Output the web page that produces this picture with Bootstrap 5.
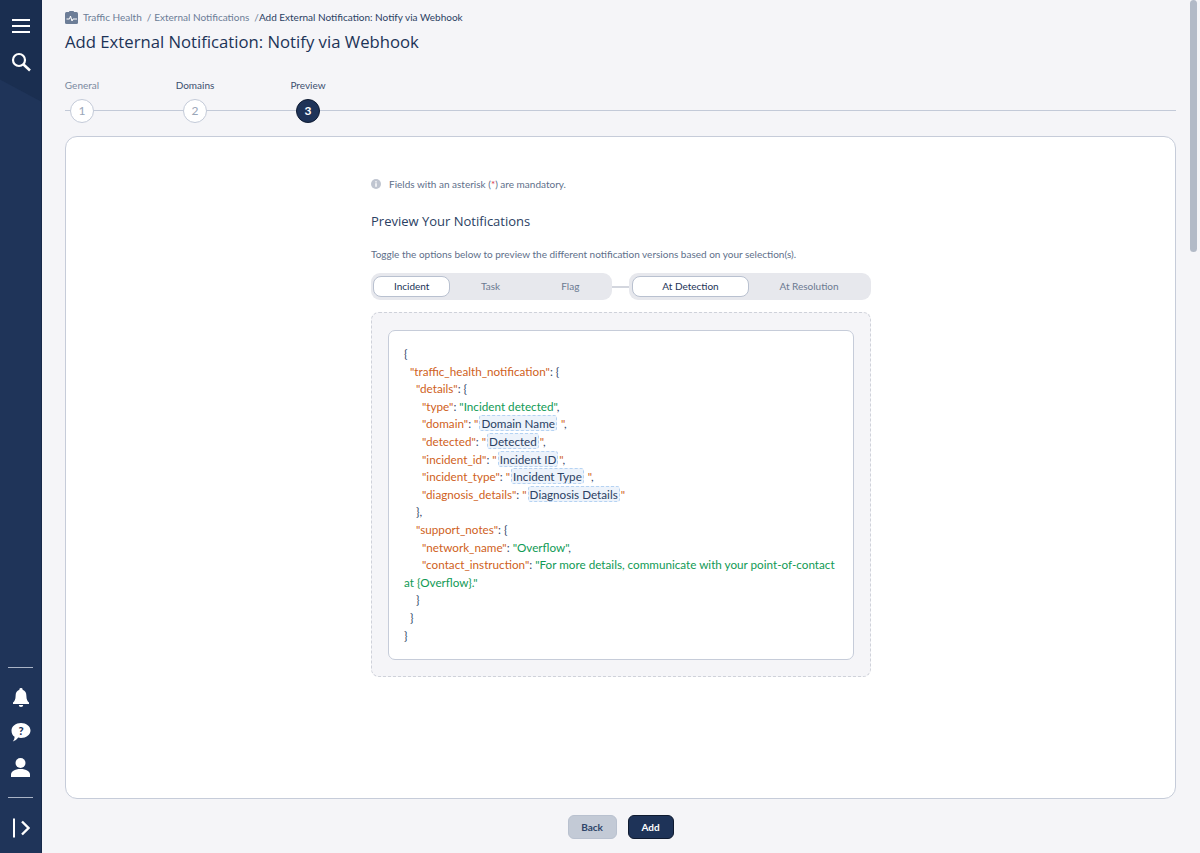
<!DOCTYPE html>
<html lang="en">
<head>
<meta charset="utf-8">
<title>Add External Notification</title>
<link href="https://cdn.jsdelivr.net/npm/bootstrap@5.3.0/dist/css/bootstrap.min.css" rel="stylesheet">
<style>
html,body{height:853px;overflow:hidden}
body{font-family:"Lato","Liberation Sans",sans-serif;background:#f5f5f8;color:#1c3357;font-size:10px}
.shell{height:853px;position:relative}
.rail{width:42px;background:#1f3459;position:relative;overflow:hidden;border-right:1px solid #17294a}
.rail-shade{position:absolute;top:0;left:0;width:42px;height:102px;background:#1a2e50;clip-path:polygon(0 0,100% 0,100% 100%,0 78%)}
.rail-top,.rail-bottom{position:relative;z-index:1}
.rail-top{padding-top:18px;gap:18px}
.rail-bottom{padding-bottom:15px}
.rail-rule{width:25px;height:1px;background:#aab4c6;margin:0 auto}
.rail svg{display:block;margin:0 auto}
.gap-bell{margin-top:20px!important}
.gap-help{margin-top:16px!important}
.gap-user{margin-top:16px!important}
.gap-rule{margin-top:20px!important}
.gap-arrow{margin-top:20px!important}
.maincol{padding:0 24px 0 23px;min-width:0}
.crumbs{height:34px;color:#6c7d97;font-size:10px;line-height:14px}
.crumb-sep{margin:0 3px 0 5px}
.crumb-now{color:#2b4163;margin-left:-3px}
.crumb-icon{margin-right:5px}
.pagehead{font-family:"Open Sans","Lato",sans-serif;font-size:16.7px;line-height:15px;font-weight:500;color:#1c3357;margin:0}
.stepper{margin-top:30px;position:relative;gap:79px;height:50px}
.stepper::before{content:"";position:absolute;left:0;right:0;top:31px;height:1px;background:#c3cad8}
.stepitem{width:34px;position:relative;z-index:1}
.steplabel{white-space:nowrap;font-size:10px;line-height:12px;height:20px;color:#3b4e6e}
.steplabel-muted{color:#7a899f}
.stepdot{width:24px;height:24px;border-radius:50%;background:#fff;border:1px solid #c3cad8;font-size:12px;color:#9aa6b8;line-height:22px;text-align:center}
.stepdot-on{background:#1e3358;border-color:#101c33;color:#fff;font-weight:700}
.panelbox{height:663px;margin-top:7px;background:#fff;border:1px solid #c6ccd9;border-radius:12px;padding-top:40px}
.panelinner{width:500px;margin-left:305px}
.reqnote{color:#5e6f8a;font-size:10px;line-height:14px;gap:8px}
.reqstar{color:#d8344a}
.subhead{font-family:"Open Sans","Lato",sans-serif;font-size:13px;font-weight:400;color:#2b4163;line-height:18px;margin:21px 0 0}
.hint{color:#5e6f8a;font-size:10px;line-height:14px;margin:17px 0 0}
.togglebar{margin-top:12px;height:27px}
.toggroup{background:#e7e8ed;border-radius:9px;height:27px;padding:3px 2px;font-size:10px;color:#6c7a91}
.togglink{flex:0 0 auto;width:17px;height:2px;background:#d3d6de}
.togopt{height:21px;line-height:21px;text-align:center;border-radius:8px}
.togopt-on{background:#fff;border:1px solid #b9c1d0;line-height:19px;color:#1c3357}
.g1{width:241px}.g2{width:242px;padding-left:3px}
.w-a{width:78px}.w-b{width:81px}.w-c{width:80px}.w-d{width:117px}.w-e{flex:1}
.dashbox{margin-top:12px;height:365px;border:1px dashed #cfd2da;border-radius:8px;background:#f5f5f8;padding:17px 16px}
.jsonbox{height:330px;background:#fff;border:1px solid #c6ccd9;border-radius:7px;padding:14px 15px;font-size:11.7px;line-height:17.6px;color:#34496b}
.jl{display:block}
.i1{padding-left:6px}.i2{padding-left:12px}.i3{padding-left:18px}
.i3w{text-indent:18px}
.jk{color:#cf5f22}
.jv{color:#0f9a55}
.tok{background:#edf3fb;border:1px dashed #b5d3f3;border-radius:3px;padding:0 1px;margin:0 1px;color:#2b4163}
.footbar{margin-top:16px;gap:11px}
.btn-back,.btn-add{font-size:10px;font-weight:700;height:24px;padding:0;line-height:22px;border-radius:6px}
.btn-back{width:49px;background:#c3cad6;border:1px solid #b9c1cf;color:#2f4569}
.btn-add{width:46px;background:#1e3358;border:1px solid #0e1a30;color:#fff}
.scrollthumb{position:absolute;top:0;right:3px;width:7px;height:252px;background:#b2bac7;border-radius:4px}
</style>
</head>
<body>
<div class="shell d-flex">
  <nav class="rail d-flex flex-column justify-content-between flex-shrink-0">
    <div class="rail-shade"></div>
    <div class="rail-top d-flex flex-column">
      <svg width="20" height="16" viewBox="0 0 20 16" aria-label="Menu"><path d="M1 2h18M1 8h18M1 14h18" stroke="#fff" stroke-width="2" fill="none"/></svg>
      <svg width="20" height="20" viewBox="0 0 20 20" aria-label="Search"><circle cx="8" cy="8" r="6" stroke="#fff" stroke-width="2.2" fill="none"/><path d="M12.5 12.5 19 18.5" stroke="#fff" stroke-width="2.6" fill="none"/></svg>
    </div>
    <div class="rail-bottom d-flex flex-column">
      <div class="rail-rule"></div>
      <svg class="gap-bell" width="16" height="19" viewBox="0 0 16 19" aria-label="Notifications"><path d="M8 0a1.6 1.6 0 0 1 1.6 1.8C12.3 2.6 13.4 5 13.4 8c0 3.500 1 5 2.600 6.600V16H0v-1.400C1.600 13 2.600 11.500 2.600 8c0-3 1.100-5.400 3.800-6.200A1.600 1.600 0 0 1 8 0zM5.800 17h4.400a2.200 2 0 0 1-4.400 0z" fill="#fff"/></svg>
      <svg class="gap-help" width="20" height="19" viewBox="0 0 20 19" aria-label="Help"><path d="M10 0c5.200 0 9.500 3.300 9.500 7.500S15.200 15 10 15c-1 0-1.900-.1-2.800-.4C6 16.500 4 18 1.800 18.500c1-1.200 1.700-2.600 1.800-4.700C1.600 12.500.5 10.100.5 7.500.500 3.300 4.800 0 10 0z" fill="#fff"/><text x="10" y="12" text-anchor="middle" font-family="Lato" font-size="11" font-weight="900" fill="#1e3358">?</text></svg>
      <svg class="gap-user" width="19" height="19" viewBox="0 0 19 19" aria-label="Profile"><circle cx="9.500" cy="5" r="5" fill="#fff"/><path d="M0 19v-2.500C0 13.500 3.500 11 9.500 11s9.500 2.500 9.500 5.500V19z" fill="#fff"/></svg>
      <div class="rail-rule gap-rule"></div>
      <svg class="gap-arrow" width="18" height="20" viewBox="0 0 18 20" aria-label="Expand"><path d="M2 .5v19" stroke="#fff" stroke-width="2" fill="none"/><path d="M10 3.500l6.500 6.500-6.500 6.500" stroke="#fff" stroke-width="2.400" fill="none"/></svg>
    </div>
  </nav>
  <main class="maincol flex-grow-1 d-flex flex-column">
    <div class="crumbs d-flex align-items-center">
      <svg class="crumb-icon" width="13" height="13" viewBox="0 0 13 13"><rect x="0" y="1" width="13" height="12" rx="1.500" fill="#6c7d97"/><rect x="4" y="0" width="5" height="2.500" rx=".8" fill="#6c7d97"/><path d="M1.500 8h3l1-3 1.500 5 1-2h4" stroke="#fff" stroke-width="1" fill="none"/></svg>
      <span>Traffic Health</span><span class="crumb-sep">/</span><span>External Notifications</span><span class="crumb-sep">/</span><span class="crumb-now">Add External Notification: Notify via Webhook</span>
    </div>
    <h1 class="pagehead">Add External Notification: Notify via Webhook</h1>
    <div class="stepper d-flex">
      <div class="stepitem d-flex flex-column align-items-center"><div class="steplabel steplabel-muted">General</div><div class="stepdot flex-shrink-0">1</div></div>
      <div class="stepitem d-flex flex-column align-items-center"><div class="steplabel">Domains</div><div class="stepdot flex-shrink-0">2</div></div>
      <div class="stepitem d-flex flex-column align-items-center"><div class="steplabel">Preview</div><div class="stepdot stepdot-on flex-shrink-0">3</div></div>
    </div>
    <section class="panelbox">
      <div class="panelinner">
        <div class="reqnote d-flex align-items-center">
          <svg width="10" height="10" viewBox="0 0 10 10"><circle cx="5" cy="5" r="5" fill="#bfc5d0"/><rect x="4.300" y="4.200" width="1.400" height="3.600" fill="#fff"/><rect x="4.300" y="2.200" width="1.400" height="1.300" fill="#fff"/></svg>
          <span>Fields with an asterisk (<span class="reqstar">*</span>) are mandatory.</span>
        </div>
        <h2 class="subhead">Preview Your Notifications</h2>
        <p class="hint">Toggle the options below to preview the different notification versions based on your selection(s).</p>
        <div class="togglebar d-flex align-items-center">
          <div class="toggroup g1 d-flex">
            <div class="togopt togopt-on w-a">Incident</div><div class="togopt w-b">Task</div><div class="togopt w-c">Flag</div>
          </div>
          <div class="togglink"></div>
          <div class="toggroup g2 d-flex">
            <div class="togopt togopt-on w-d">At Detection</div><div class="togopt w-e">At Resolution</div>
          </div>
        </div>
        <div class="dashbox">
          <div class="jsonbox">
            <span class="jl">{</span>
            <span class="jl i1"><span class="jk">"traffic_health_notification"</span>: {</span>
            <span class="jl i2"><span class="jk">"details"</span>: {</span>
            <span class="jl i3"><span class="jk">"type"</span>: <span class="jv">"Incident detected"</span>,</span>
            <span class="jl i3"><span class="jk">"domain"</span>: <span class="jk">"</span><span class="tok">Domain Name</span> <span class="jk">"</span>,</span>
            <span class="jl i3"><span class="jk">"detected"</span>: <span class="jk">"</span><span class="tok">Detected</span><span class="jk">"</span>,</span>
            <span class="jl i3"><span class="jk">"incident_id"</span>: <span class="jk">"</span><span class="tok">Incident ID</span><span class="jk">"</span>,</span>
            <span class="jl i3"><span class="jk">"incident_type"</span>: <span class="jk">"</span><span class="tok">Incident Type</span> <span class="jk">"</span>,</span>
            <span class="jl i3"><span class="jk">"diagnosis_details"</span>: <span class="jk">"</span><span class="tok">Diagnosis Details</span><span class="jk">"</span></span>
            <span class="jl i2">},</span>
            <span class="jl i2"><span class="jk">"support_notes"</span>: {</span>
            <span class="jl i3"><span class="jk">"network_name"</span>: <span class="jv">"Overflow"</span>,</span>
            <span class="jl i3w"><span class="jk">"contact_instruction"</span>: <span class="jv">"For more details, communicate with your point-of-contact at {Overflow}."</span></span>
            <span class="jl i2">}</span>
            <span class="jl i1">}</span>
            <span class="jl">}</span>
          </div>
        </div>
      </div>
    </section>
    <div class="footbar d-flex justify-content-center">
      <button type="button" class="btn btn-back">Back</button>
      <button type="button" class="btn btn-add">Add</button>
    </div>
  </main>
  <div class="scrollthumb"></div>
</div>
<script src="https://cdn.jsdelivr.net/npm/bootstrap@5.3.0/dist/js/bootstrap.bundle.min.js"></script>
</body>
</html>
